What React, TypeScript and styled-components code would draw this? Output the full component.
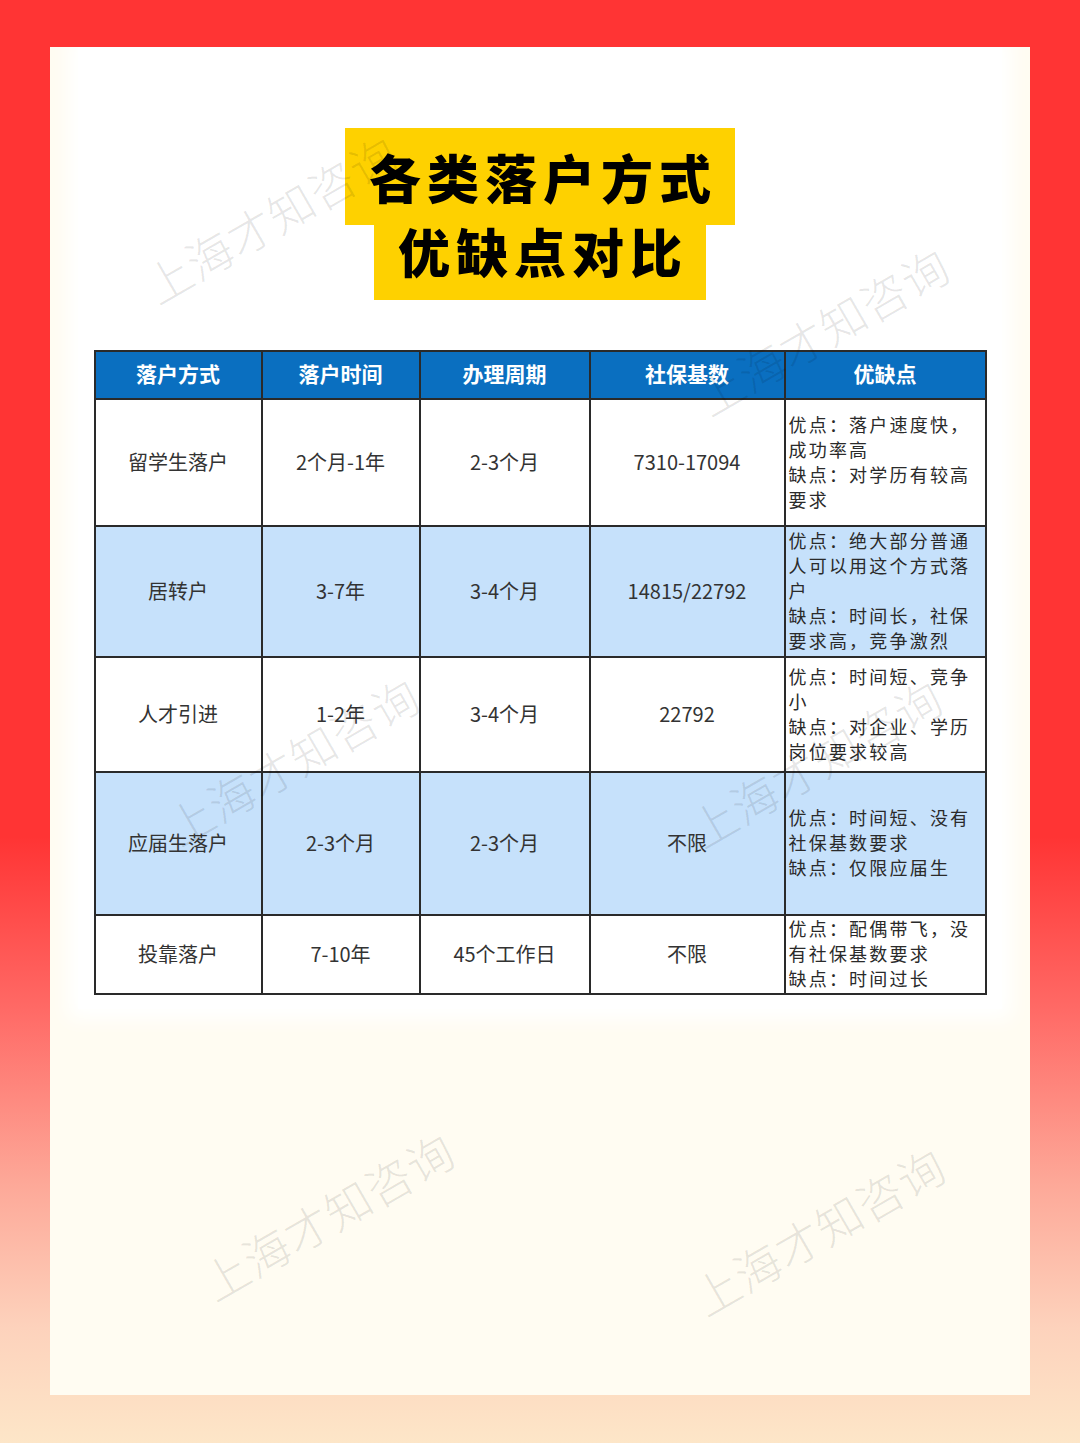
import React from 'react';
import styled, { createGlobalStyle } from 'styled-components';

const GlobalStyle = createGlobalStyle`
  html, body {
    margin: 0;
    padding: 0;
  }
  body {
    font-family: "Noto Sans CJK SC", "Noto Sans", sans-serif;
  }
`;

type Row = {
  way: string;
  time: string;
  cycle: string;
  base: string;
  notes: string[];
  height: number;
  tint: boolean;
};

const rows: Row[] = [
  {
    way: '留学生落户',
    time: '2个月-1年',
    cycle: '2-3个月',
    base: '7310-17094',
    notes: ['优点：落户速度快，', '成功率高', '缺点：对学历有较高', '要求'],
    height: 127,
    tint: false,
  },
  {
    way: '居转户',
    time: '3-7年',
    cycle: '3-4个月',
    base: '14815/22792',
    notes: ['优点：绝大部分普通', '人可以用这个方式落', '户', '缺点：时间长，社保', '要求高，竞争激烈'],
    height: 131,
    tint: true,
  },
  {
    way: '人才引进',
    time: '1-2年',
    cycle: '3-4个月',
    base: '22792',
    notes: ['优点：时间短、竞争', '小', '缺点：对企业、学历', '岗位要求较高'],
    height: 115,
    tint: false,
  },
  {
    way: '应届生落户',
    time: '2-3个月',
    cycle: '2-3个月',
    base: '不限',
    notes: ['优点：时间短、没有', '社保基数要求', '缺点：仅限应届生'],
    height: 143,
    tint: true,
  },
  {
    way: '投靠落户',
    time: '7-10年',
    cycle: '45个工作日',
    base: '不限',
    notes: ['优点：配偶带飞，没', '有社保基数要求', '缺点：时间过长'],
    height: 79,
    tint: false,
  },
];

const headers = ['落户方式', '落户时间', '办理周期', '社保基数', '优缺点'];
const colWidths = [167, 158, 170, 195, 201];

// 水印位置（中心点）
const marks = [
  { x: 270, y: 218 },
  { x: 822, y: 330 },
  { x: 292, y: 760 },
  { x: 815, y: 762 },
  { x: 327, y: 1215 },
  { x: 818, y: 1230 },
];

const App: React.FC = () => {
  return (
    <>
      <GlobalStyle />
      <Page>
        <Card>
          <Sheet>
            <TitleWrap>
              <TitleLine $top>各类落户方式</TitleLine>
              <TitleLine>优缺点对比</TitleLine>
            </TitleWrap>
            <Table>
              <colgroup>
                {colWidths.map((w, i) => (
                  <col key={i} style={{ width: w }} />
                ))}
              </colgroup>
              <thead>
                <HeadRow>
                  {headers.map((h) => (
                    <HeadCell key={h}>{h}</HeadCell>
                  ))}
                </HeadRow>
              </thead>
              <tbody>
                {rows.map((r) => (
                  <BodyRow key={r.way} $tint={r.tint} style={{ height: r.height }}>
                    <Cell>{r.way}</Cell>
                    <Cell>{r.time}</Cell>
                    <Cell>{r.cycle}</Cell>
                    <Cell>{r.base}</Cell>
                    <NoteCell>
                      {r.notes.map((n, i) => (
                        <NoteLine key={i}>{n}</NoteLine>
                      ))}
                    </NoteCell>
                  </BodyRow>
                ))}
              </tbody>
            </Table>
          </Sheet>
        </Card>
        {marks.map((m, i) => (
          <Watermark key={i} style={{ left: m.x, top: m.y }}>
            上海才知咨询
          </Watermark>
        ))}
      </Page>
    </>
  );
};

const Page = styled.div`
  position: relative;
  width: 1080px;
  height: 1443px;
  box-sizing: border-box;
  padding: 47px 50px 48px;
  overflow: hidden;
  background: linear-gradient(
    180deg,
    #ff3434 0%,
    #ff3434 58%,
    #ff6a66 70%,
    #fda898 82%,
    #fdd2bc 92%,
    #fde6c8 100%
  );
`;

const Card = styled.div`
  height: 100%;
  background: #fffcf2;
  overflow: hidden;
`;

const Sheet = styled.div`
  margin: 0 28px;
  padding: 81px 0 14px;
  background: #ffffff;
  box-shadow: 0 0 18px 10px #ffffff;
  display: flex;
  flex-direction: column;
  align-items: center;
`;

const TitleWrap = styled.div`
  display: flex;
  flex-direction: column;
  align-items: center;
`;

const TitleLine = styled.div<{ $top?: boolean }>`
  background: #fed100;
  color: #000;
  font-family: "Noto Sans CJK SC", sans-serif;
  font-weight: 900;
  font-size: 52px;
  letter-spacing: 6px;
  line-height: ${(p) => (p.$top ? 75 : 51)}px;
  height: ${(p) => (p.$top ? 97 : 75)}px;
  padding: ${(p) => (p.$top ? '11px' : '0')} 18px 0 24px;
  box-sizing: border-box;
`;

const Table = styled.table`
  margin-top: 50px;
  width: 891px;
  table-layout: fixed;
  border-collapse: collapse;
  border: 2px solid #2a2a2a;
`;

const HeadRow = styled.tr`
  height: 48px;
`;

const HeadCell = styled.th`
  background: #0a6fc0;
  color: #fff;
  font-size: 21px;
  font-weight: 700;
  text-align: center;
  vertical-align: middle;
  border: 2px solid #2a2a2a;
  padding: 0 0 4px;
  line-height: 24px;
`;

const BodyRow = styled.tr<{ $tint: boolean }>`
  background: ${(p) => (p.$tint ? '#c6e1fb' : '#ffffff')};
`;

const Cell = styled.td`
  border: 2px solid #2a2a2a;
  text-align: center;
  vertical-align: middle;
  font-size: 20px;
  color: #333;
  padding: 0 0 3px;
`;

const NoteCell = styled.td`
  border: 2px solid #2a2a2a;
  vertical-align: middle;
  padding: 0 0 2px 3px;
  font-size: 18px;
  letter-spacing: 2.2px;
  color: #2a2a2a;
  white-space: nowrap;
`;

const NoteLine = styled.div`
  line-height: 25px;
`;

const Watermark = styled.div`
  position: absolute;
  transform: translate(-50%, -50%) rotate(-30deg);
  font-family: "Noto Sans CJK SC", sans-serif;
  font-weight: 300;
  font-size: 46px;
  letter-spacing: 1px;
  color: rgba(0, 0, 0, 0.1);
  white-space: nowrap;
  pointer-events: none;
`;

export default App;
